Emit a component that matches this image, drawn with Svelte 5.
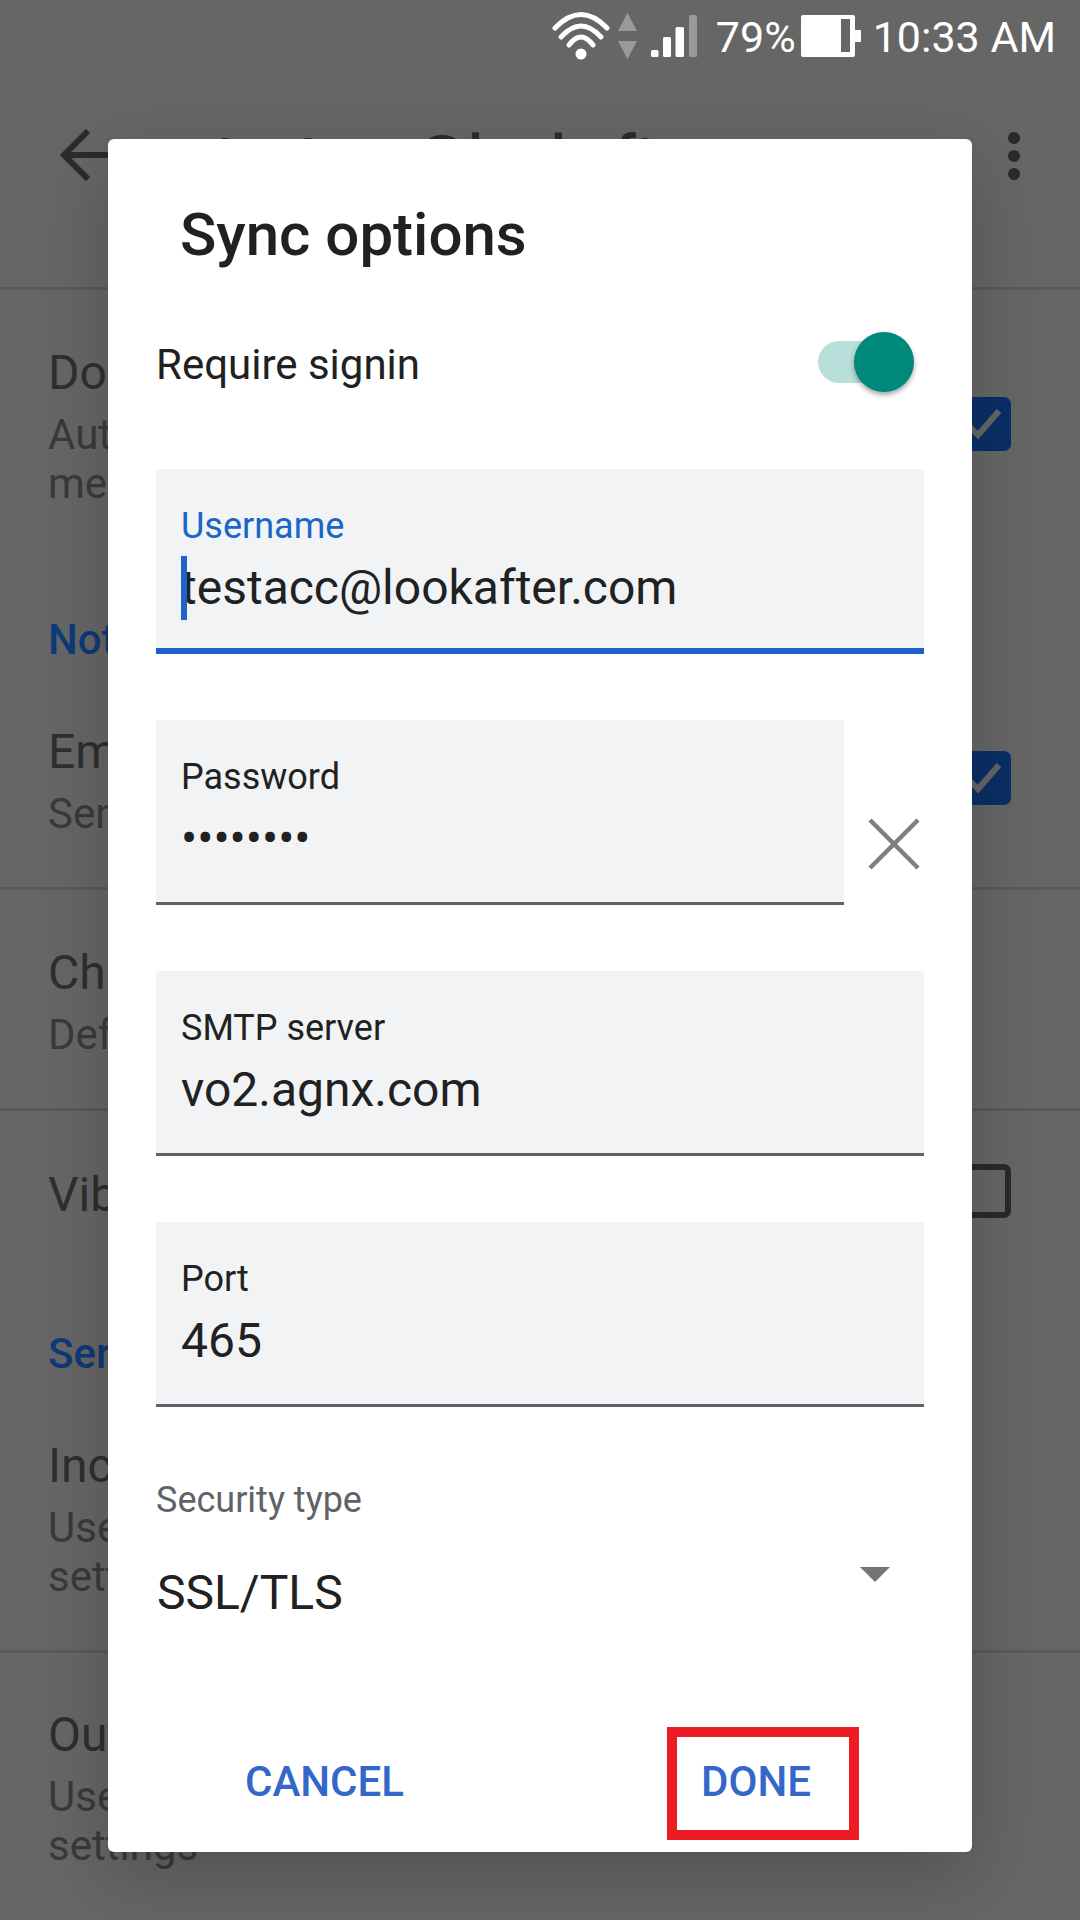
<script>
	const fields = [
		{ label: 'Username', value: 'testacc@lookafter.com', active: true },
		{ label: 'Password', value: '••••••••', clear: true },
		{ label: 'SMTP server', value: 'vo2.agnx.com' },
		{ label: 'Port', value: '465' }
	];
</script>

<div class="page">
	<div class="status">
		<svg class="wifi" width="58" height="48" viewBox="0 0 58 48" fill="none" stroke="#fff" stroke-width="5" stroke-linecap="round">
			<path d="M3 16Q29 -11 55 16" />
			<path d="M9 25Q29 3 49 25" />
			<path d="M17 33Q29 17 41 33" />
			<circle cx="29" cy="42" r="5.5" fill="#fff" stroke="none" />
		</svg>
		<svg class="updown" width="19" height="46" viewBox="0 0 19 46" fill="#999">
			<path d="M9.5 0L19 18H0Z" />
			<path d="M0 28H19L9.5 46Z" />
		</svg>
		<svg class="signal" width="46" height="43" viewBox="0 0 46 43">
			<rect x="0" y="35" width="7.500" height="7" rx="1.500" fill="#fff" />
			<rect x="12" y="22" width="8" height="20" rx="1.500" fill="#fff" />
			<rect x="24.500" y="12" width="8.500" height="30" rx="1.500" fill="#fff" />
			<rect x="38" y="0" width="8" height="42" rx="1.500" fill="#999" />
		</svg>
		<span class="pct">79%</span>
		<svg class="battery" width="60" height="42" viewBox="0 0 60 42">
			<path d="M2 0H52a2 2 0 0 1 2 2V15H60V27H54V40a2 2 0 0 1-2 2H2a2 2 0 0 1-2-2V2a2 2 0 0 1 2-2Z" fill="#fff" />
			<rect x="40" y="4" width="9" height="33" fill="#666" />
		</svg>
		<span class="clock">10:33 AM</span>
	</div>

	<div class="toolbar">
		<svg class="back" width="60" height="52" viewBox="0 0 60 52" fill="none" stroke="#2b2b2b" stroke-width="6">
			<path d="M28 2L4 26L28 50M4 26H60" />
		</svg>
		<span class="screen-title">testacc@lookafter.com</span>
		<div class="dots"><i></i><i></i><i></i></div>
	</div>

	<div class="item first">
		<div class="item-title">Do not sync</div>
		<div class="item-sub">Automatically sync<br />messages</div>
		<span class="check on"><svg width="54" height="54" viewBox="0 0 54 54" fill="none" stroke="#666" stroke-width="6"><path d="M11 28L21 38L42 14" /></svg></span>
	</div>

	<div class="section s1">Notifications</div>

	<div class="item email">
		<div class="item-title">Email notifications</div>
		<div class="item-sub">Send notifications</div>
		<span class="check on"><svg width="54" height="54" viewBox="0 0 54 54" fill="none" stroke="#666" stroke-width="6"><path d="M11 28L21 38L42 14" /></svg></span>
	</div>

	<div class="item bordered tone">
		<div class="item-title">Choose ringtone</div>
		<div class="item-sub">Default</div>
	</div>

	<div class="item bordered vib">
		<div class="item-title">Vibrate</div>
		<span class="check off"></span>
	</div>

	<div class="section s2">Server settings</div>

	<div class="item incoming">
		<div class="item-title">Incoming settings</div>
		<div class="item-sub">Username, password and<br />settings</div>
	</div>

	<div class="item bordered outgoing">
		<div class="item-title">Outgoing settings</div>
		<div class="item-sub">Username, password and<br />settings</div>
	</div>

	<div class="dialog">
		<h2>Sync options</h2>

		<div class="switch-row">
			<span>Require signin</span>
			<span class="switch"><span class="track"></span><span class="thumb"></span></span>
		</div>

		{#each fields as field}
			<div class="field-row">
				<div class="field" class:active={field.active}>
					<div class="label">{field.label}</div>
					<div class="value">
						{#if field.active}<span class="caret"></span>{/if}{field.value}
					</div>
				</div>
				{#if field.clear}
					<svg class="clear" width="52" height="52" viewBox="0 0 52 52" stroke="#7f7f7f" stroke-width="4.500">
						<path d="M2 2L50 50M50 2L2 50" />
					</svg>
				{/if}
			</div>
		{/each}

		<div class="select-label">Security type</div>
		<div class="select">
			<span>SSL/TLS</span>
			<span class="arrow"></span>
		</div>

		<div class="actions">
			<span class="btn">CANCEL</span>
			<span class="btn done">DONE<span class="highlight"></span></span>
		</div>
	</div>
</div>

<style>
	:global(body) {
		margin: 0;
		background: #666;
	}
	.page {
		position: relative;
		width: 1080px;
		height: 1920px;
		overflow: hidden;
		background: #666;
		font-family: Roboto, 'Liberation Sans', sans-serif;
		color: #2f2f2f;
	}

	/* status bar */
	.status {
		display: flex;
		align-items: flex-start;
		justify-content: flex-end;
		height: 72px;
		padding-right: 24px;
		box-sizing: border-box;
		color: #fff;
		font-size: 43px;
		line-height: 49px;
	}
	.wifi {
		margin-top: 12px;
	}
	.updown {
		margin: 13px 0 0 8px;
	}
	.signal {
		margin: 15px 19px 0 14px;
	}
	.pct,
	.clock {
		margin-top: 13px;
	}
	.battery {
		margin: 15px 12px 0 5px;
	}

	/* screen behind the dialog */
	.toolbar {
		position: relative;
		display: flex;
		height: 218px;
		border-bottom: 3px solid #5a5a5a;
		box-sizing: border-box;
	}
	.back {
		margin: 57px 0 0 60px;
	}
	.screen-title {
		margin: 50px 0 0 96px;
		font-size: 60px;
		font-weight: 500;
		line-height: 70px;
		color: #2b2b2b;
	}
	.dots {
		display: flex;
		flex-direction: column;
		gap: 6px;
		margin: 60px 0 0 auto;
		padding-right: 60px;
	}
	.dots i {
		display: block;
		width: 12px;
		height: 12px;
		border-radius: 50%;
		background: #2b2b2b;
	}
	.item {
		position: relative;
		padding-left: 48px;
	}
	.bordered {
		border-top: 3px solid #5a5a5a;
	}
	.item-title {
		font-size: 48px;
		line-height: 56px;
		color: #2f2f2f;
	}
	.item-sub {
		font-size: 42px;
		line-height: 49px;
		color: #3a3a3a;
		margin-top: 9px;
	}
	.section {
		padding-left: 48px;
		font-size: 42px;
		font-weight: 500;
		line-height: 49px;
		color: #0e3a78;
	}
	.check {
		position: absolute;
		left: 957px;
		width: 54px;
		height: 54px;
		box-sizing: border-box;
		border-radius: 7px;
	}
	.check.on {
		background: #0a2f66;
	}
	.check.off {
		border: 6px solid #2a2a2a;
	}
	.first {
		padding-top: 55px;
	}
	.first .check {
		top: 107px;
	}
	.s1 {
		margin-top: 107px;
	}
	.email {
		margin-top: 60px;
	}
	.email .check {
		top: 27px;
	}
	.tone {
		margin-top: 49px;
		padding-top: 55px;
	}
	.vib {
		margin-top: 49px;
		padding-top: 56px;
	}
	.vib .check {
		top: 53px;
	}
	.s2 {
		margin-top: 106px;
	}
	.incoming {
		margin-top: 60px;
	}
	.outgoing {
		margin-top: 49px;
		padding-top: 54px;
	}

	/* dialog */
	.dialog {
		position: absolute;
		left: 108px;
		top: 139px;
		width: 864px;
		height: 1713px;
		box-sizing: border-box;
		padding: 61px 48px 0;
		background: #fff;
		border-radius: 6px;
		box-shadow: 0 24px 72px rgba(0, 0, 0, 0.2);
		color: #212121;
	}
	h2 {
		margin: 0 0 0 24px;
		font-size: 60px;
		font-weight: 500;
		line-height: 70px;
	}
	.switch-row {
		display: flex;
		align-items: center;
		justify-content: space-between;
		height: 61px;
		margin-top: 62px;
		font-size: 42px;
	}
	.switch-row > span:first-child {
		margin-top: 4px;
	}
	.switch {
		position: relative;
		width: 95px;
		height: 61px;
		margin-right: 11px;
	}
	.track {
		position: absolute;
		left: 0;
		top: 9px;
		width: 82px;
		height: 42px;
		border-radius: 21px;
		background: #b9dfdb;
	}
	.thumb {
		position: absolute;
		left: 36px;
		top: 0;
		width: 60px;
		height: 60px;
		border-radius: 50%;
		background: #00897b;
		box-shadow: 0 3px 5px rgba(0, 0, 0, 0.35);
	}
	.field-row {
		display: flex;
		margin-bottom: 66px;
	}
	.switch-row + .field-row {
		margin-top: 76px;
	}
	.field {
		flex: 1;
		height: 185px;
		box-sizing: border-box;
		padding: 36px 0 0 25px;
		background: #f1f3f5;
		border-bottom: 3px solid #5f6368;
		border-radius: 3px 3px 0 0;
	}
	.field.active {
		border-bottom: 6px solid #1f63c8;
	}
	.field.active .label {
		color: #1a66c6;
	}
	.label {
		font-size: 36px;
		line-height: 42px;
	}
	.value {
		position: relative;
		margin-top: 13px;
		font-size: 48px;
		line-height: 56px;
	}
	.caret {
		position: absolute;
		left: 0;
		top: -4px;
		width: 6px;
		height: 64px;
		background: #1f63c8;
	}
	.clear {
		margin: 98px 4px 0 24px;
	}
	.select-label {
		margin-top: 72px;
		font-size: 36px;
		line-height: 42px;
		color: #5f6368;
	}
	.select {
		display: flex;
		align-items: flex-start;
		justify-content: space-between;
		margin-top: 44px;
		padding-left: 1px;
		font-size: 48px;
		line-height: 56px;
	}
	.arrow {
		width: 0;
		height: 0;
		margin: 2px 34px 0 0;
		border-left: 15px solid transparent;
		border-right: 15px solid transparent;
		border-top: 15px solid #757575;
	}
	.actions {
		display: flex;
		justify-content: space-between;
		margin-top: 137px;
		padding: 0 113px 0 89px;
	}
	.btn {
		font-size: 42px;
		font-weight: 500;
		line-height: 48px;
		color: #3367c9;
	}
	.done {
		position: relative;
	}
	.highlight {
		position: absolute;
		left: -34px;
		top: -31px;
		width: 192px;
		height: 113px;
		box-sizing: border-box;
		border: 10px solid #ed1c24;
	}
</style>
